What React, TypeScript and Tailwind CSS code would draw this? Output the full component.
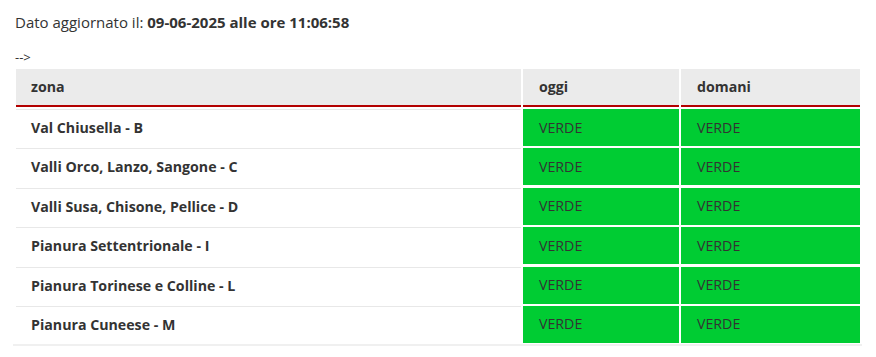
const zone = [
  "Val Chiusella - B",
  "Valli Orco, Lanzo, Sangone - C",
  "Valli Susa, Chisone, Pellice - D",
  "Pianura Settentrionale - I",
  "Pianura Torinese e Colline - L",
  "Pianura Cuneese - M",
];

export default function App() {
  return (
    <div className="bg-white w-[876px] h-[357px] text-[#333] font-['Open_Sans',sans-serif] text-[14px] leading-[20px]">
      <p className="pl-[15px] pt-[12px] text-[15px] leading-[21px]">
        Dato aggiornato il: <b>09-06-2025 alle ore 11:06:58</b>
      </p>
      <p className="pl-[15px] mt-[15px] text-[13px] leading-[18px]">--&gt;</p>

      <div className="ml-[16px] mt-[3px] w-[844px] text-[14.2px]">
        {/* intestazione */}
        <div className="grid grid-cols-[505px_156px_179px] gap-x-[2px]">
          <div className="bg-[#ebebeb] h-[38px] pl-[15px] flex items-center font-bold border-b-2 border-[#b30000]">zona</div>
          <div className="bg-[#ebebeb] h-[38px] pl-[16px] flex items-center font-bold border-b-2 border-[#b30000]">oggi</div>
          <div className="bg-[#ebebeb] h-[38px] pl-[16px] flex items-center font-bold border-b-2 border-[#b30000]">domani</div>
        </div>

        <div className="mt-[2px] flex flex-col gap-y-[2.4px]">
          {zone.map((z) => (
            <div key={z} className="grid grid-cols-[505px_156px_179px] gap-x-[2px] h-[37px]">
              <div className="border-t border-[#e8e8e8] pl-[15px] flex items-center font-bold">{z}</div>
              <div className="bg-[#00cc33] pl-[16px] flex items-center">VERDE</div>
              <div className="bg-[#00cc33] pl-[16px] flex items-center">VERDE</div>
            </div>
          ))}
        </div>
        <div className="mt-[1px] -ml-[3px] w-[849px] h-[2px] bg-[#f0f0f0]" />
      </div>
    </div>
  );
}
